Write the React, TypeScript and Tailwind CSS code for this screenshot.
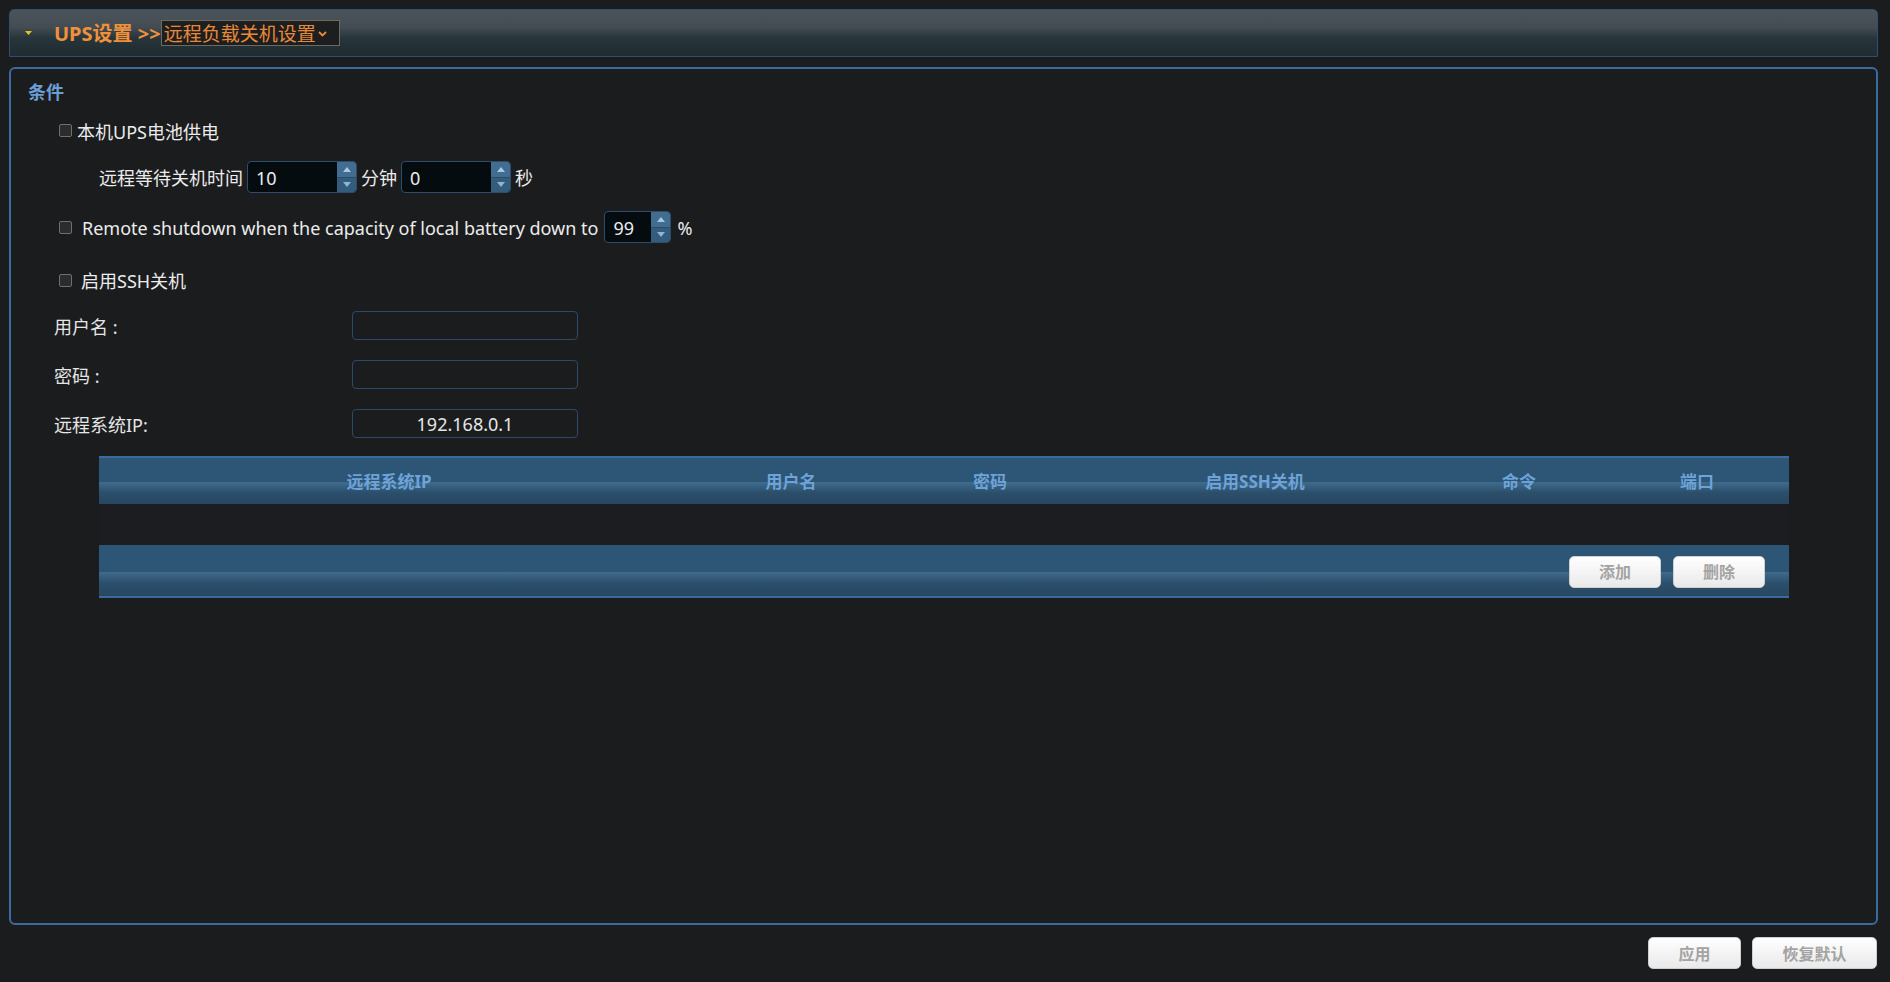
import React from 'react';

const font = { fontFamily: '"Noto Sans", "Noto Sans CJK SC", sans-serif' };

function Checkbox() {
    return <span className="block h-[13px] w-[13px] shrink-0 rounded-[2px] border border-[#6f6f6f] bg-[#2c2c2e]" />;
}

function Spinner() {
    return (
        <div className="flex h-full w-[19px] shrink-0 flex-col overflow-hidden rounded-r-[3px]">
            <div className="flex flex-1 items-center justify-center bg-[#416d90]">
                <svg width="8" height="5" viewBox="0 0 8 5"><path d="M4 0L8 5H0z" fill="#a8c9e4" /></svg>
            </div>
            <div className="h-px bg-[#2b4d6a]" />
            <div className="flex flex-1 items-center justify-center bg-[#335c7d]">
                <svg width="8" height="5" viewBox="0 0 8 5"><path d="M0 0h8L4 5z" fill="#8fb4d4" /></svg>
            </div>
        </div>
    );
}

function NumberBox({ value, wide }: { value: string; wide?: boolean }) {
    return (
        <div className={`flex h-[32px] items-stretch rounded-[4px] border border-[#2e4d6b] bg-[#050c10] ${wide ? 'w-[110px]' : 'w-[67px]'}`}>
            <span className="flex flex-1 items-center pl-[8px] pt-[2px] text-[18px] text-[#ececec]">{value}</span>
            <Spinner />
        </div>
    );
}

function FieldRow({ label, value }: { label: string; value?: string }) {
    return (
        <div className="flex h-[29px] items-center pl-[43px]">
            <span className="w-[298px] pt-[4px] text-[18px] text-[#e6e6e6]">{label}</span>
            <div className="flex h-[29px] w-[226px] items-center justify-center rounded-[4px] border border-[#2b4a68] pt-[2px] text-[18px] text-[#e6e6e6]">
                {value}
            </div>
        </div>
    );
}

const columns = [
    { name: '远程系统IP', w: 'w-[580px]' },
    { name: '用户名', w: 'w-[224px]' },
    { name: '密码', w: 'w-[174px]' },
    { name: '启用SSH关机', w: 'w-[356px]' },
    { name: '命令', w: 'w-[172px]' },
    { name: '端口', w: 'w-[184px]' },
];

const barBg = 'bg-[linear-gradient(to_bottom,#2d5575_0%,#2d5575_52%,#3e6b8d_53%,#2b4e6a_76%,#264862_100%)]';

function LightButton({ label, w }: { label: string; w: string }) {
    return (
        <button className={`flex h-[32px] ${w} items-center justify-center rounded-[5px] border border-[#cfcfcf] bg-[linear-gradient(to_bottom,#ffffff,#e9e9e9)] pt-[1px] text-[16px] font-semibold text-[#a3a3a3]`}>
            {label}
        </button>
    );
}

export default function App() {
    return (
        <div className="h-[982px] w-[1890px] overflow-hidden bg-[#1b1c1e] pl-[9px] pt-[9px]" style={font}>
            {/* title bar */}
            <div className="flex h-[48px] w-[1869px] items-center rounded-t-[5px] border border-[#2f4f72] bg-[linear-gradient(to_bottom,#4a5459_0%,#424c52_38%,#26343b_62%,#1f2c32_100%)] pl-[15px]">
                <svg width="7" height="4" viewBox="0 0 7 4" className="mr-[22px]"><path d="M0 0h7L3.5 4z" fill="#e8c21c" /></svg>
                <span className="pt-[2px] text-[20px] font-bold text-[#f0913a]">UPS设置 &gt;&gt;</span>
                <div className="flex h-[26px] w-[179px] items-center gap-[2px] border border-[#6e6a5e] bg-[#1d1e1f] pl-[2px] pt-[2px]">
                    <span className="text-[19px] leading-none text-[#e8893a]">远程负载关机设置</span>
                    <svg width="9" height="6" viewBox="0 0 9 6"><path d="M1 1l3.5 3.5L8 1" stroke="#e8893a" strokeWidth="1.8" fill="none" /></svg>
                </div>
            </div>

            {/* conditions panel */}
            <div className="mt-[10px] flex h-[858px] w-[1869px] flex-col rounded-[6px] border-2 border-[#3a6aa0]">
                <div className="flex h-[42px] items-center pl-[17px] pt-[4px] text-[18px] font-bold text-[#6b9fd5]">条件</div>

                <div className="flex h-[39px] items-center pl-[48px]">
                    <Checkbox />
                    <span className="ml-[5px] pt-[4px] text-[18px] text-[#ececec]">本机UPS电池供电</span>
                </div>

                <div className="flex h-[54px] items-center gap-[4px] pl-[88px] text-[18px] text-[#ececec]">
                    <span className="pt-[2px]">远程等待关机时间</span>
                    <NumberBox value="10" wide />
                    <span className="pt-[2px]">分钟</span>
                    <NumberBox value="0" wide />
                    <span className="pt-[2px]">秒</span>
                </div>

                <div className="flex h-[46px] items-center pl-[48px] text-[18px] text-[#ececec]">
                    <Checkbox />
                    <span className="ml-[10px] mr-[6px] pt-[2px]">Remote shutdown when the capacity of local battery down to</span>
                    <NumberBox value="99" />
                    <span className="ml-[6px] pt-[2px]">%</span>
                </div>

                <div className="flex h-[61px] items-center pl-[48px]">
                    <Checkbox />
                    <span className="ml-[9px] pt-[2px] text-[18px] text-[#ececec]">启用SSH关机</span>
                </div>

                <FieldRow label="用户名 :" />
                <div className="mt-[20px]"><FieldRow label="密码 :" /></div>
                <div className="mt-[20px]"><FieldRow label="远程系统IP:" value="192.168.0.1" /></div>

                {/* remote list */}
                <div className="ml-[88px] mt-[18px] w-[1690px]">
                    <div className={`flex h-[48px] items-center border-t-2 border-[#3a6aa0] pt-[2px] ${barBg}`}>
                        {columns.map((c) => (
                            <div key={c.name} className={`${c.w} text-center text-[17px] font-bold text-[#6ea3d8]`}>{c.name}</div>
                        ))}
                    </div>
                    <div className="h-[41px] bg-[#1c1d20]" />
                    <div className={`flex h-[53px] items-center justify-end gap-[12px] border-b-2 border-[#3a6aa0] pr-[24px] pt-[2px] ${barBg}`}>
                        <LightButton label="添加" w="w-[92px]" />
                        <LightButton label="删除" w="w-[92px]" />
                    </div>
                </div>
            </div>

            {/* page actions */}
            <div className="mt-[12px] flex w-[1869px] justify-end gap-[11px] pr-px">
                <LightButton label="应用" w="w-[93px]" />
                <LightButton label="恢复默认" w="w-[125px]" />
            </div>
        </div>
    );
}
